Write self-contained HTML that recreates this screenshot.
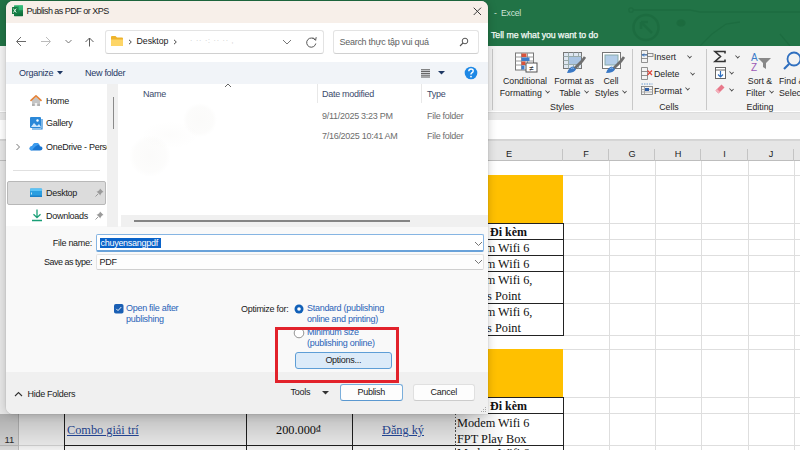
<!DOCTYPE html>
<html><head><meta charset="utf-8">
<style>
*{margin:0;padding:0;box-sizing:border-box}
html,body{width:800px;height:450px;overflow:hidden;background:#fff;font-family:"Liberation Sans",sans-serif;}
.a{position:absolute}
#xl{position:absolute;left:0;top:0;width:800px;height:450px;}
#green{left:0;top:0;width:800px;height:46px;background:#217346;}
#ribbon{left:0;top:46px;width:800px;height:65px;background:#f3f3f3;}
#gbar{left:0;top:112px;width:800px;height:8.5px;background:#e8e8e8;border-top:1px solid #dcdcdc;border-bottom:1px solid #dadada}
#fbar{left:0;top:120px;width:800px;height:20px;background:#fff;border-bottom:1px solid #d4d4d4;}
#colhdr{left:0;top:139.5px;width:800px;height:21px;background:#e6e6e6;border-top:1px solid #d6d6d6;border-bottom:1px solid #bdbdbd;}
.ch{position:absolute;top:0;height:20px;line-height:27px;text-align:center;font-size:9.2px;color:#222;}
.ch:after{content:"";position:absolute;right:0;top:8px;width:1px;height:12px;background:#c4c4c4}
.gl{position:absolute;background:#dedede}
.tx{position:absolute;font-family:"Liberation Serif",serif;font-size:12.3px;color:#111;white-space:nowrap}
.rb{position:absolute;font-size:8.8px;color:#262626;white-space:nowrap;text-align:center;line-height:11.5px}
.cv{display:inline-block;width:5px;height:4px;border:solid #444;border-width:0 1px 1px 0;transform:rotate(45deg) scale(0.75);vertical-align:3px;margin-left:1px}
i.cv.a{position:absolute}
/* dialog */
#dlg{left:6px;top:1px;width:482px;height:413px;background:#f9f9f9;border-radius:7px 7px 0 7px;overflow:hidden;box-shadow:0 0 10px rgba(0,0,0,0.2),0 0 1px rgba(0,0,0,0.35);}
.d{position:absolute;white-space:nowrap;font-size:9px;letter-spacing:-0.28px;color:#1a1a1a}
</style></head><body>
<div id="xl">
  <div id="green" class="a"></div>
  <svg class="a" style="left:0;top:0" width="800" height="46">
    <g stroke="#1c6b3f" stroke-width="1.3" fill="none" opacity="0.8">
      <circle cx="631" cy="10" r="2.2"/>
      <path d="M633 10 H690 L700 12 H800"/>
      <circle cx="646" cy="27.5" r="12.5" stroke-width="2.6"/>
      <path d="M641 22 L652 33 M641 22 H648 M641 22 V29" stroke-width="2.6"/>
      <path d="M700 46 L712 34 L726 24 L740 22"/>
      <path d="M780 34 L790 46"/>
      <ellipse cx="681" cy="23" rx="4" ry="3" fill="#1b6a3d"/>
    </g>
  </svg>
  <div class="a" style="left:494px;top:7.5px;font-size:8.6px;color:#cfe3d6;letter-spacing:-0.2px">-&nbsp; Excel</div>
  <div class="a" style="left:491px;top:30px;font-size:8.8px;color:#f4faf6;-webkit-text-stroke:0.25px #f4faf6;letter-spacing:-0.05px">Tell me what you want to do</div>
  <div id="ribbon" class="a"></div>
  <!-- ribbon separators -->
  <div class="a" style="left:492px;top:49px;width:1px;height:61px;background:#c8c8c8"></div>
  <div class="a" style="left:632px;top:49px;width:1px;height:61px;background:#c8c8c8"></div>
  <div class="a" style="left:706px;top:49px;width:1px;height:61px;background:#c8c8c8"></div>
  <!-- ribbon labels -->
  <div class="rb" style="left:495px;top:76px;width:60px">Conditional<br>Formatting <i class="cv"></i></div>
  <div class="rb" style="left:548px;top:76px;width:52px">Format as<br>Table <i class="cv"></i></div>
  <div class="rb" style="left:591px;top:76px;width:40px">Cell<br>Styles <i class="cv"></i></div>
  <div class="rb" style="left:530px;top:102px;width:64px">Styles</div>
  <div class="rb" style="left:654px;top:51.5px;text-align:left">Insert</div>
  <div class="rb" style="left:654px;top:69px;text-align:left">Delete</div>
  <div class="rb" style="left:654px;top:85.5px;text-align:left">Format <i class="cv" style="vertical-align:4px"></i></div>
  <i class="cv a" style="left:685.5px;top:53.8px"></i>
  <i class="cv a" style="left:688.5px;top:70.5px"></i>
  <div class="rb" style="left:640px;top:101.5px;width:58px">Cells</div>
  <i class="cv a" style="left:734px;top:54px"></i>
  <i class="cv a" style="left:728px;top:70.3px"></i>
  <i class="cv a" style="left:728px;top:86.8px"></i>
  <div class="rb" style="left:740px;top:76px;width:40px">Sort &amp;<br>Filter <i class="cv"></i></div>
  <div class="rb" style="left:779px;top:76px;text-align:left">Find &amp;<br>Select</div>
  <div class="rb" style="left:730px;top:102px;width:60px">Editing</div>
  <!-- ribbon icons -->
  <svg class="a" style="left:0;top:46px" width="800" height="65">
    <!-- conditional formatting -->
    <g transform="translate(515,6.5)">
      <rect x="0.5" y="0.5" width="18" height="17" fill="#fff" stroke="#777"/>
      <path d="M0.5 4.5H18.5M0.5 8.5H18.5M0.5 12.5H18.5M6.5 0.5V17.5M12.5 0.5V17.5" stroke="#999"/>
      <rect x="6.5" y="1" width="5" height="3.5" fill="#d9533b"/>
      <rect x="6.5" y="5" width="8" height="3.5" fill="#3d7cc9"/>
      <rect x="6.5" y="9" width="4" height="3.5" fill="#d9533b"/>
      <rect x="6.5" y="13" width="3" height="4" fill="#3d7cc9"/>
      <rect x="11" y="10.5" width="11" height="9" fill="#fff" stroke="#555"/>
      <text x="16.5" y="18" font-size="8" text-anchor="middle" fill="#333" font-family="Liberation Sans">≠</text>
    </g>
    <!-- format as table -->
    <g transform="translate(563,6)">
      <rect x="0.5" y="0.5" width="18" height="16" fill="#dfe7f1" stroke="#777"/>
      <path d="M0.5 4.5H18.5M0.5 8.5H18.5M0.5 12.5H18.5M5.5 0.5V16.5M10.5 0.5V16.5M15.5 0.5V16.5" stroke="#9aa"/>
      <rect x="6" y="5" width="12" height="7" fill="#a9c4e2"/>
      <path d="M11 17 L19 9 L22 5" stroke="#6f6f6f" stroke-width="2.8"/>
      <path d="M4 21 Q6 15 10 14.5 L13 17 Q12 21 4 21Z" fill="#3a78c4"/>
      <path d="M8 16.5 Q10 15.5 11 16.5" stroke="#9cc3ee" stroke-width="0.8" fill="none"/>
    </g>
    <!-- cell styles -->
    <g transform="translate(602,6)">
      <rect x="0.5" y="0.5" width="18" height="16" fill="#fff" stroke="#777"/>
      <rect x="3" y="3" width="13" height="10" fill="#b3cde8" stroke="#8aa"/>
      <path d="M11 17 L19 9 L22 5" stroke="#6f6f6f" stroke-width="2.8"/>
      <path d="M4 21 Q6 15 10 14.5 L13 17 Q12 21 4 21Z" fill="#3a78c4"/>
      <path d="M8 16.5 Q10 15.5 11 16.5" stroke="#9cc3ee" stroke-width="0.8" fill="none"/>
    </g>
    <!-- insert/delete/format -->
    <g transform="translate(641,4)" fill="none" stroke-width="0.8">
      <path d="M0.5 0.5 H6.5 V12.5 H0.5Z M0.5 4.5 H6.5 M0.5 8.5 H6.5" stroke="#777"/>
      <rect x="6.5" y="3.5" width="5.5" height="3" stroke="#777"/>
      <path d="M1.5 5 H6 M3 3.5 L1.5 5 L3 6.5" stroke="#2f6fbf" stroke-width="1"/>
    </g>
    <g transform="translate(641,21)" fill="none" stroke-width="0.8">
      <path d="M0.5 0.5 H6.5 V12.5 H0.5Z M0.5 4.5 H6.5 M0.5 8.5 H6.5" stroke="#777"/>
      <path d="M6.5 3.5 L11 8 M11 3.5 L6.5 8" stroke="#e0443a" stroke-width="1.2"/>
    </g>
    <g transform="translate(641,37)" fill="none" stroke-width="0.8">
      <path d="M0.5 1 H11.5" stroke="#4a86c8" stroke-dasharray="1.5 1"/>
      <rect x="0.5" y="3.5" width="11" height="8" stroke="#777"/>
      <path d="M0.5 6.5 H11.5 M0.5 9 H11.5 M3.5 3.5 V11.5" stroke="#999"/>
      <rect x="4" y="5" width="4" height="3" fill="#2f5fa8" stroke="none"/>
    </g>
    <!-- sigma -->
    <path d="M715 5.5 H725 V7.5 M725 5.5 H715 L720.5 10.5 L715 15.5 H725 V13.5" stroke="#333" stroke-width="1.6" fill="none"/>
    <g transform="translate(715,21)">
      <rect x="0.5" y="0.5" width="10" height="11" fill="#fff" stroke="#666"/>
      <path d="M0.5 3H10.5" stroke="#666"/>
      <path d="M5.5 4 V10 M3 7.5 L5.5 10 L8 7.5" stroke="#2f6fbf" stroke-width="1.2" fill="none"/>
    </g>
    <path d="M715.5 44.5 L721.5 38.5 L724.5 41.5 L718.5 47.5Z" fill="#e8788a"/><path d="M715.5 44.5 L717 43 L720 46 L718.5 47.5Z" fill="#f4b0bb"/>
    <!-- sort filter -->
    <text x="751" y="15" font-size="10" fill="#3d7cc9" font-family="Liberation Sans">A</text>
    <text x="751" y="25" font-size="10" fill="#9b59b6" font-family="Liberation Sans">Z</text>
    <path d="M758 12 H771 L766 17 V23 L763 21 V17Z" fill="#888"/>
    <!-- find -->
    <circle cx="794" cy="13" r="6.5" fill="none" stroke="#2f6fbf" stroke-width="1.8"/>
    <path d="M789 18 L784 23" stroke="#2f6fbf" stroke-width="2.2"/>
  </svg>
  <div id="gbar" class="a"></div>
  <div class="a" style="left:0;top:121px;width:5px;height:18px;border-right:1px solid #cfcfcf;background:#f7f7f7"></div>
  <div id="fbar" class="a"></div>
  <div id="colhdr" class="a">
    <div class="ch" style="left:455px;width:108px">E</div>
    <div class="ch" style="left:563px;width:46px">F</div>
    <div class="ch" style="left:609px;width:46px">G</div>
    <div class="ch" style="left:655px;width:46px">H</div>
    <div class="ch" style="left:701px;width:47px">I</div>
    <div class="ch" style="left:748px;width:46px">J</div>
  </div>
  <div class="a" style="left:0;top:161px;width:800px;height:289px;background:#fff"></div>
  <!-- gridlines vertical -->
  <div class="gl" style="left:609px;top:161px;width:1px;height:289px"></div>
  <div class="gl" style="left:655px;top:161px;width:1px;height:289px"></div>
  <div class="gl" style="left:701px;top:161px;width:1px;height:289px"></div>
  <div class="gl" style="left:748px;top:161px;width:1px;height:289px"></div>
  <div class="gl" style="left:794px;top:161px;width:1px;height:289px"></div>
  <!-- gridlines horizontal -->
  <div class="gl" style="left:0;top:175px;width:800px;height:1px"></div>
  <div class="gl" style="left:0;top:223px;width:800px;height:1px"></div>
  <div class="gl" style="left:0;top:239px;width:800px;height:1px"></div>
  <div class="gl" style="left:0;top:255px;width:800px;height:1px"></div>
  <div class="gl" style="left:0;top:271px;width:800px;height:1px"></div>
  <div class="gl" style="left:0;top:303px;width:800px;height:1px"></div>
  <div class="gl" style="left:0;top:335px;width:800px;height:1px"></div>
  <div class="gl" style="left:0;top:349px;width:800px;height:1px"></div>
  <div class="gl" style="left:0;top:397px;width:800px;height:1px"></div>
  <div class="gl" style="left:0;top:413px;width:800px;height:1px"></div>
  <div class="gl" style="left:0;top:445px;width:800px;height:1px"></div>
  <!-- yellow -->
  <div class="a" style="left:0;top:175px;width:563px;height:48px;background:#ffc000"></div>
  <div class="a" style="left:0;top:349px;width:563px;height:48px;background:#ffc000"></div>
  <!-- black table borders col E -->
  <div class="a" style="left:455px;top:223px;width:109px;height:113px;border:1px solid #222;border-width:1px 1px 1px 1px"></div>
  <div class="a" style="left:455px;top:239px;width:108px;height:1px;background:#222"></div>
  <div class="a" style="left:455px;top:255px;width:108px;height:1px;background:#222"></div>
  <div class="a" style="left:455px;top:271px;width:108px;height:1px;background:#222"></div>
  <div class="a" style="left:455px;top:303px;width:108px;height:1px;background:#222"></div>
  <div class="a" style="left:0;top:397px;width:563px;height:1px;background:#222"></div>
  <div class="a" style="left:0;top:413px;width:563px;height:1px;background:#222"></div>
  <div class="a" style="left:64px;top:445px;width:499px;height:1px;background:#222"></div>
  <div class="a" style="left:563px;top:397px;width:1px;height:53px;background:#222"></div>
  <div class="a" style="left:64px;top:413px;width:1px;height:37px;background:#222"></div>
  <div class="a" style="left:246px;top:413px;width:1px;height:37px;background:#222"></div>
  <div class="a" style="left:352px;top:413px;width:1px;height:37px;background:#222"></div>
  <div class="a" style="left:455px;top:413px;width:1px;height:37px;background:repeating-linear-gradient(to bottom,#555 0,#555 2px,transparent 2px,transparent 3.5px)"></div>
  <!-- row header col -->
  <div class="a" style="left:0;top:161px;width:19px;height:289px;background:#e6e6e6;border-right:1px solid #c6c6c6"></div>
  <div class="a" style="left:0;top:445px;width:19px;height:1px;background:#c6c6c6"></div>
  <div class="a" style="left:4.5px;top:433.5px;font-size:9.5px;color:#333">11</div>
  <!-- cell texts -->
  <div class="tx" style="left:490px;top:225px;font-weight:bold;font-size:12px">Đi kèm</div>
  <div class="tx" style="left:457px;top:241px">Modem Wifi 6</div>
  <div class="tx" style="left:457px;top:257px">Modem Wifi 6</div>
  <div class="tx" style="left:457px;top:273px">Modem Wifi 6,</div>
  <div class="tx" style="left:457px;top:289px">Access Point</div>
  <div class="tx" style="left:457px;top:305px">Modem Wifi 6,</div>
  <div class="tx" style="left:457px;top:321px">Access Point</div>
  <div class="tx" style="left:490px;top:399px;font-weight:bold;font-size:12px">Đi kèm</div>
  <div class="tx" style="left:457px;top:416px">Modem Wifi 6</div>
  <div class="tx" style="left:457px;top:431.5px">FPT Play Box</div>
  <div class="tx" style="left:457px;top:446px">Modem Wifi 6,</div>
  <div class="tx" style="left:67px;top:423px;color:#2a4fa8;text-decoration:underline">Combo giải trí</div>
  <div class="tx" style="left:276px;top:423px">200.000<span style="font-size:9px;vertical-align:3px">₫</span></div>
  <div class="tx" style="left:382px;top:423px;color:#2a4fa8;text-decoration:underline">Đăng ký</div>
</div>
<div class="a" style="left:0;top:414px;width:505px;height:36px;background:linear-gradient(to bottom,rgba(0,0,0,0.25),rgba(0,0,0,0.18) 40%,rgba(0,0,0,0.1) 86%,rgba(0,0,0,0.06));-webkit-mask-image:linear-gradient(to right,#000 0,#000 452px,rgba(0,0,0,0.45) 480px,transparent 505px)"></div>
<div id="dlg" class="a">
 <div class="a" style="left:-6px;top:-1px;width:800px;height:450px">
  <!-- title -->
  <div class="a" style="left:6px;top:1px;width:482px;height:21.5px;background:#f7efe9"></div>
  <svg class="a" style="left:11px;top:4px" width="13" height="13" viewBox="0 0 13 13">
    <defs><linearGradient id="xg" x1="0" y1="0" x2="0.3" y2="1"><stop offset="0" stop-color="#2fb874"/><stop offset="1" stop-color="#0f6e3a"/></linearGradient></defs>
    <rect x="3" y="1.2" width="9" height="11" rx="0.6" fill="url(#xg)"/>
    <rect x="8" y="1.2" width="4" height="5" fill="#3fcf8a" opacity="0.55"/>
    <rect x="1" y="3" width="5.6" height="7" rx="0.5" fill="#157a43"/>
    <path d="M2.4 4.6 L5.2 8.6 M5.2 4.6 L2.4 8.6" stroke="#d8f5e3" stroke-width="1"/>
  </svg>
  <div class="d" style="left:26.5px;top:5.8px;font-size:9px;letter-spacing:-0.52px;color:#1a1a1a">Publish as PDF or XPS</div>
  <svg class="a" style="left:472.5px;top:6.7px" width="9" height="9"><path d="M0.7 0.7 L8 8 M8 0.7 L0.7 8" stroke="#3a3a3a" stroke-width="1"/></svg>
  <!-- address row -->
  <div class="a" style="left:6px;top:22.5px;width:482px;height:39.5px;background:#fff"></div>
  <svg class="a" style="left:14px;top:35px" width="90" height="13">
    <path d="M3 6.5 H12 M7 2 L2.5 6.5 L7 11" stroke="#6a6a6a" stroke-width="1" fill="none"/>
    <path d="M27 6.5 H36 M32 2 L36.5 6.5 L32 11" stroke="#bcbcbc" stroke-width="1" fill="none"/>
    <path d="M51.5 5 L54.5 8 L57.5 5" stroke="#666" stroke-width="0.9" fill="none"/>
    <path d="M75.5 3 V11.5 M71.5 7 L75.5 3 L79.5 7" stroke="#5a5a5a" stroke-width="1" fill="none"/>
  </svg>
  <div class="a" style="left:105px;top:30px;width:219px;height:24px;background:#fff;border:1px solid #e3e3e3;border-bottom-color:#d0d0d0;border-radius:3px"></div>
  <svg class="a" style="left:110px;top:35px" width="14" height="12">
    <path d="M1 2 Q1 1 2 1 H5.5 L7 2.5 H12 Q13 2.5 13 3.5 V10 Q13 11 12 11 H2 Q1 11 1 10Z" fill="#eeb32b"/>
    <path d="M1 4.5 H13 V10 Q13 11 12 11 H2 Q1 11 1 10Z" fill="#fdd567"/>
  </svg>
  <svg class="a" style="left:127.5px;top:38.8px" width="5" height="6"><path d="M1 0.8 L3.3 3 L1 5.2" stroke="#333" stroke-width="0.9" fill="none"/></svg>
  <div class="d" style="left:136.5px;top:36px;color:#1a1a1a;font-size:8.8px;letter-spacing:-0.05px">Desktop</div>
  <svg class="a" style="left:172.5px;top:38.8px" width="5" height="6"><path d="M1 0.8 L3.3 3 L1 5.2" stroke="#333" stroke-width="0.9" fill="none"/></svg>
  <div class="d" style="left:190px;top:37px;color:#c8c8c8;font-size:7px;letter-spacing:0.8px">· ·· ·: ·· ·· ,</div>
  <svg class="a" style="left:282px;top:39px" width="10" height="6"><path d="M1 1 L5 5 L9 1" stroke="#666" stroke-width="0.9" fill="none"/></svg>
  <svg class="a" style="left:305px;top:36px" width="13" height="13"><path d="M10.2 4.2 A4.6 4.6 0 1 0 10.8 7.5" stroke="#555" stroke-width="1" fill="none"/><path d="M8 1.5 L10.6 4.3 L11.2 1.2" stroke="#555" stroke-width="1" fill="none"/></svg>
  <div class="a" style="left:333px;top:30px;width:146px;height:24px;background:#fff;border:1px solid #e3e3e3;border-bottom-color:#d0d0d0;border-radius:3px"></div>
  <div class="d" style="left:339.5px;top:36.5px;color:#5f5f5f">Search thực tập vui quá</div>
  <svg class="a" style="left:459px;top:37px" width="10" height="10"><circle cx="6" cy="4" r="2.8" stroke="#555" stroke-width="1" fill="none"/><path d="M4 6 L1 9" stroke="#555" stroke-width="1.1"/></svg>
  <!-- toolbar -->
  <div class="a" style="left:6px;top:62px;width:482px;height:22.5px;background:#f1f4f8"></div>
  <div class="d" style="left:19px;top:67.5px;color:#1f3864">Organize</div>
  <svg class="a" style="left:57px;top:71px" width="6" height="4"><path d="M0 0 H6 L3 3.5Z" fill="#1f3864"/></svg>
  <div class="d" style="left:85px;top:67.5px;color:#1f3864">New folder</div>
  <svg class="a" style="left:421px;top:68.5px" width="10" height="9"><path d="M0 0.8 H9 M0 2.6 H9 M0 4.4 H9 M0 6.2 H9 M0 8 H9" stroke="#555" stroke-width="1"/></svg>
  <svg class="a" style="left:438px;top:71px" width="7" height="4"><path d="M0 0 H7 L3.5 3.5Z" fill="#1f3864"/></svg>
  <svg class="a" style="left:464px;top:66px" width="14" height="14"><circle cx="7" cy="7" r="6.3" fill="#1e88e5"/><path d="M4.8 5.2 Q4.8 3 7 3 Q9.2 3 9.2 5 Q9.2 6.2 7.6 7 Q7 7.4 7 8.4" stroke="#fff" stroke-width="1.4" fill="none"/><circle cx="7" cy="10.6" r="0.9" fill="#fff"/></svg>
  <!-- content area -->
  <div class="a" style="left:6px;top:84px;width:482px;height:142px;background:#fff"></div>
  <div class="a" style="left:107px;top:84px;width:11px;height:142.5px;background:#f0f0f0"></div>
  <div class="a" style="left:112.5px;top:97px;width:1.5px;height:32px;background:#8a8a8a"></div>
  <!-- nav items -->
  <svg class="a" style="left:29px;top:94px" width="14" height="13">
    <path d="M3 6.5 V12 H11 V6.5 L7 3Z" fill="#c4c4c4"/>
    <path d="M3 12 H11 V10 H3Z" fill="#b0b0b0"/>
    <path d="M5.8 12 V9 H8.2 V12Z" fill="#f2f2f2"/>
    <path d="M1.5 6.8 L7 1.8 L12.5 6.8" stroke="#e5843a" stroke-width="1.7" fill="none" stroke-linejoin="round"/>
  </svg>
  <div class="d" style="left:46px;top:95.5px">Home</div>
  <svg class="a" style="left:30px;top:117px" width="13" height="13">
    <rect x="0" y="0" width="11" height="11" rx="1" fill="#2b88d8"/>
    <path d="M1 10 L4 6 L7 9 L9 7 L11 10Z" fill="#cfe6fb"/>
    <circle cx="7.5" cy="3.5" r="1.2" fill="#fff"/>
    <path d="M12 2 V12 H2" stroke="#2b88d8" stroke-width="1.2" fill="none"/>
  </svg>
  <div class="d" style="left:46px;top:118px">Gallery</div>
  <svg class="a" style="left:15px;top:143px" width="6" height="8"><path d="M1.5 1 L4.5 4 L1.5 7" stroke="#666" stroke-width="0.9" fill="none"/></svg>
  <svg class="a" style="left:29px;top:142px" width="14" height="9">
    <path d="M3 8.5 Q0.3 8.5 0.6 6 Q1 4 3.3 4.3 Q4.2 0.8 7.5 1 Q10.5 1.3 10.9 4.2 Q13.6 4.4 13.5 6.6 Q13.3 8.5 11 8.5Z" fill="#1976d2"/>
    <path d="M3 8.5 Q0.3 8.5 0.6 6 Q1 4 3.3 4.3 Q4.2 0.8 7.5 1 Q9.5 1.2 10.3 2.8 Q6 3.5 3 8.5Z" fill="#3d9df0"/>
  </svg>
  <div class="a" style="left:46px;top:141.5px;width:61px;overflow:hidden"><div class="d" style="position:relative">OneDrive - Personal</div></div>
  <div class="a" style="left:13px;top:170px;width:87px;height:1px;background:#e0e0e0"></div>
  <div class="a" style="left:7px;top:181px;width:99px;height:23.5px;background:#dcdcdc;border:1px solid #b8b8b8;border-radius:2px"></div>
  <svg class="a" style="left:30px;top:188px" width="13" height="10">
    <rect x="0" y="0.5" width="12" height="8.5" rx="0.8" fill="#2a9ee0"/>
    <rect x="0" y="0.5" width="12" height="2.5" rx="0.8" fill="#5cc3f5"/>
    <rect x="0" y="7.5" width="12" height="1.5" fill="#1c80c8"/>
    <path d="M1.5 4.5 V6.5" stroke="#e8f6fe" stroke-width="0.8"/>
  </svg>
  <div class="d" style="left:46px;top:187.5px">Desktop</div>
  <svg class="a" style="left:95px;top:188px" width="9" height="9"><path d="M5 0.5 L8.5 4 L7 4.5 L5.5 6.5 L5.5 7.5 L1.5 3.5 L2.5 3.5 L4.5 2 Z" fill="#9a9a9a"/><path d="M3 6 L0.5 8.5" stroke="#9a9a9a" stroke-width="1"/></svg>
  <svg class="a" style="left:31px;top:209px" width="12" height="13">
    <path d="M6 0.5 V8.5 M2.5 5.2 L6 8.7 L9.5 5.2" stroke="#1a9f77" stroke-width="1.3" fill="none"/>
    <path d="M1 11.5 H11" stroke="#1a9f77" stroke-width="1.5"/>
  </svg>
  <div class="d" style="left:46px;top:210.5px">Downloads</div>
  <svg class="a" style="left:95px;top:211px" width="9" height="9"><path d="M5 0.5 L8.5 4 L7 4.5 L5.5 6.5 L5.5 7.5 L1.5 3.5 L2.5 3.5 L4.5 2 Z" fill="#9a9a9a"/><path d="M3 6 L0.5 8.5" stroke="#9a9a9a" stroke-width="1"/></svg>
  <div class="a" style="left:125px;top:100px;width:110px;height:100px;background:radial-gradient(circle at 75px 20px,rgba(120,110,80,0.03) 0,rgba(120,110,80,0.022) 13px,transparent 17px),radial-gradient(circle at 25px 56px,rgba(120,110,80,0.03) 0,rgba(120,110,80,0.02) 16px,transparent 21px),radial-gradient(ellipse 30px 14px at 45px 35px,rgba(120,110,80,0.018),transparent)"></div>
  <!-- file list header -->
  <svg class="a" style="left:224px;top:83px" width="8" height="5"><path d="M1 4 L4 1 L7 4" stroke="#555" stroke-width="0.9" fill="none"/></svg>
  <div class="d" style="left:143px;top:88.5px;color:#3b4a6b">Name</div>
  <div class="a" style="left:317px;top:84px;width:1px;height:19px;background:#e8e8e8"></div>
  <div class="d" style="left:322px;top:88.5px;color:#3b4a6b">Date modified</div>
  <div class="a" style="left:421px;top:84px;width:1px;height:19px;background:#e8e8e8"></div>
  <div class="d" style="left:427px;top:88.5px;color:#3b4a6b">Type</div>
  <div class="d" style="left:322px;top:110.5px;color:#6d6d6d">9/11/2025 3:23 PM</div>
  <div class="d" style="left:427px;top:110.5px;color:#6d6d6d">File folder</div>
  <div class="d" style="left:322px;top:130.5px;color:#6d6d6d">7/16/2025 10:41 AM</div>
  <div class="d" style="left:427px;top:130.5px;color:#6d6d6d">File folder</div>
  <div class="a" style="left:121px;top:215px;width:367px;height:11.5px;background:#f0f0f0"></div>
  <div class="a" style="left:133.5px;top:220px;width:276.5px;height:2px;background:#858585"></div>
  <!-- bottom panel -->
  <div class="a" style="left:6px;top:226.5px;width:482px;height:146.5px;background:#f9f9f9"></div>
  <div class="d" style="left:40px;top:238px;width:52px;text-align:right">File name:</div>
  <div class="a" style="left:96px;top:234px;width:388px;height:17.5px;background:#fff;border:1px solid #86b5e3;border-bottom:2px solid #69a2d9;border-radius:2px"></div>
  <div class="a" style="left:100px;top:238px;width:60.5px;height:9.5px;background:#0a63c9"></div>
  <div class="d" style="left:100.5px;top:237.5px;color:#fff">chuyensangpdf</div>
  <svg class="a" style="left:474px;top:241px" width="9" height="6"><path d="M1 1 L4.5 4.5 L8 1" stroke="#666" stroke-width="0.9" fill="none"/></svg>
  <div class="d" style="left:30px;top:256.5px;width:62px;text-align:right;letter-spacing:-0.5px">Save as type:</div>
  <div class="a" style="left:96px;top:254px;width:388px;height:15.5px;background:#fdfdfd;border:1px solid #e2e2e2;border-bottom-color:#cfcfcf;border-radius:2px"></div>
  <div class="d" style="left:99.5px;top:256.5px">PDF</div>
  <svg class="a" style="left:474px;top:259px" width="9" height="6"><path d="M1 1 L4.5 4.5 L8 1" stroke="#666" stroke-width="0.9" fill="none"/></svg>
  <!-- checkbox -->
  <svg class="a" style="left:114px;top:304px" width="10" height="10"><rect x="0" y="0" width="9.5" height="9.5" rx="1.8" fill="#1a5fb4"/><path d="M2.3 4.9 L4 6.6 L7.3 3" stroke="#fff" stroke-width="0.9" fill="none"/></svg>
  <div class="d" style="left:126px;top:303px;color:#2a63b8;line-height:11.3px">Open file after<br>publishing</div>
  <div class="d" style="left:241px;top:303.5px">Optimize for:</div>
  <svg class="a" style="left:293px;top:303px" width="12" height="12"><circle cx="6" cy="6" r="4.5" fill="#1160b8"/><circle cx="6" cy="6" r="1.8" fill="#fff"/></svg>
  <div class="d" style="left:307px;top:303px;color:#2a63b8;line-height:11.3px">Standard (publishing<br>online and printing)</div>
  <svg class="a" style="left:293px;top:327px" width="12" height="12"><circle cx="6" cy="6" r="4.8" fill="#fff" stroke="#888" stroke-width="0.9"/></svg>
  <div class="d" style="left:307px;top:327px;color:#2a63b8;line-height:11.3px">Minimum size<br>(publishing online)</div>
  <div class="a" style="left:295px;top:352px;width:96.5px;height:17px;background:#dcebf9;border:1px solid #5e9ed6;border-radius:3px"></div>
  <div class="d" style="left:295px;top:355px;width:96.5px;text-align:center">Options...</div>
  <!-- bottom band -->
  <div class="a" style="left:6px;top:372px;width:482px;height:42px;background:#f0f0f0"></div>
  <svg class="a" style="left:14px;top:391px" width="9" height="6"><path d="M1 5 L4.5 1.5 L8 5" stroke="#333" stroke-width="1.1" fill="none"/></svg>
  <div class="d" style="left:27.5px;top:389px">Hide Folders</div>
  <div class="d" style="left:290.5px;top:387px">Tools</div>
  <svg class="a" style="left:322px;top:391px" width="7" height="4"><path d="M0 0 H7 L3.5 3.5Z" fill="#333"/></svg>
  <div class="a" style="left:340px;top:384px;width:62.5px;height:16.5px;background:#fdfdfd;border:1px solid #7aaedb;border-bottom:1.5px solid #5b98d0;border-radius:3px"></div>
  <div class="d" style="left:340px;top:387px;width:62.5px;text-align:center">Publish</div>
  <div class="a" style="left:412.5px;top:384px;width:62.5px;height:16.5px;background:#fdfdfd;border:1px solid #e0e0e0;border-bottom-color:#cccccc;border-radius:3px"></div>
  <div class="d" style="left:412.5px;top:387px;width:62.5px;text-align:center">Cancel</div>
  <svg class="a" style="left:480px;top:406px" width="7" height="7"><g fill="#aaa"><rect x="5" y="1" width="1" height="1"/><rect x="3" y="3" width="1" height="1"/><rect x="5" y="3" width="1" height="1"/><rect x="1" y="5" width="1" height="1"/><rect x="3" y="5" width="1" height="1"/><rect x="5" y="5" width="1" height="1"/></g></svg>
  <!-- red box -->
  <div class="a" style="left:275px;top:327px;width:124px;height:55.5px;border:3px solid #e2222b"></div>
 </div>
</div>
</body></html>
